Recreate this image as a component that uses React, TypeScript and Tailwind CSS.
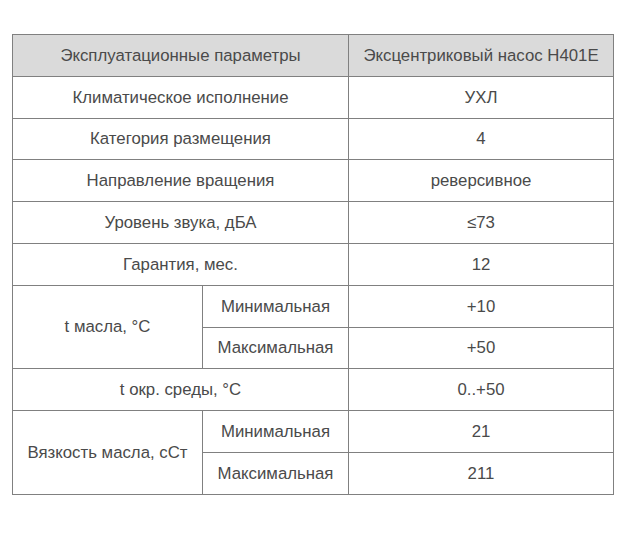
import React from 'react';

const cell = 'border border-[#808080] h-[41.8px] text-center align-middle px-2';

const rows: { label: string; value: string }[] = [
  { label: 'Климатическое исполнение', value: 'УХЛ' },
  { label: 'Категория размещения', value: '4' },
  { label: 'Направление вращения', value: 'реверсивное' },
  { label: 'Уровень звука, дБА', value: '≤73' },
  { label: 'Гарантия, мес.', value: '12' },
];

export default function App() {
  return (
    <div className="w-[624px] h-[541px] bg-white pt-[34px] pl-[12px]" style={{ fontFamily: '"Liberation Sans", Arial, sans-serif' }}>
      <table className="border-collapse w-[601px] table-fixed text-[16.8px] text-[#4a4a4a]">
        <colgroup>
          <col className="w-[190px]" />
          <col className="w-[146px]" />
          <col className="w-[265px]" />
        </colgroup>
        <tbody>
          <tr className="bg-[#dadada]">
            <td className={cell} colSpan={2}>Эксплуатационные параметры</td>
            <td className={cell}>Эксцентриковый насос Н401Е</td>
          </tr>
          {rows.map((r) => (
            <tr key={r.label}>
              <td className={cell} colSpan={2}>{r.label}</td>
              <td className={cell}>{r.value}</td>
            </tr>
          ))}
          <tr>
            <td className={cell} rowSpan={2}>t масла, °С</td>
            <td className={cell}>Минимальная</td>
            <td className={cell}>+10</td>
          </tr>
          <tr>
            <td className={cell}>Максимальная</td>
            <td className={cell}>+50</td>
          </tr>
          <tr>
            <td className={cell} colSpan={2}>t окр. среды, °С</td>
            <td className={cell}>0..+50</td>
          </tr>
          <tr>
            <td className={cell} rowSpan={2}>Вязкость масла, сСт</td>
            <td className={cell}>Минимальная</td>
            <td className={cell}>21</td>
          </tr>
          <tr>
            <td className={cell}>Максимальная</td>
            <td className={cell}>211</td>
          </tr>
        </tbody>
      </table>
    </div>
  );
}
